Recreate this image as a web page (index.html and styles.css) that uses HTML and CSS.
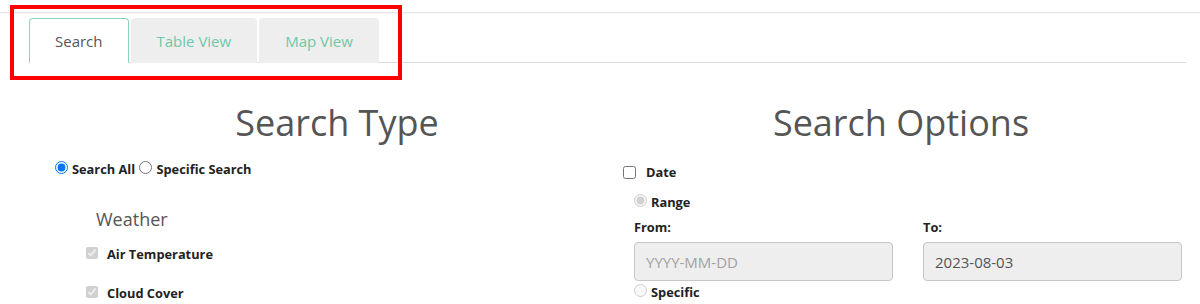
FILE: index.html
```html
<!DOCTYPE html>
<html lang="en">
<head>
<meta charset="utf-8">
<title>Search</title>
<link rel="stylesheet" href="styles.css">
</head>
<body>
<div class="topbar"></div>
<ul class="tabs">
  <li class="tab active">Search</li>
  <li class="tab">Table View</li>
  <li class="tab">Map View</li>
</ul>
<div class="highlight"></div>
<div class="content">
  <section class="col">
    <h2 class="col-title">Search Type</h2>
    <div class="type-row">
      <label class="choice"><input class="radio" type="radio" name="stype" checked>Search All</label>
      <label class="choice"><input class="radio" type="radio" name="stype">Specific Search</label>
    </div>
    <div class="group">
      <h3 class="group-title">Weather</h3>
      <label class="check-row"><input class="check" type="checkbox" checked disabled>Air Temperature</label>
      <label class="check-row second"><input class="check" type="checkbox" checked disabled>Cloud Cover</label>
    </div>
  </section>
  <section class="col">
    <h2 class="col-title">Search Options</h2>
    <label class="date-row"><input class="date-check" type="checkbox">Date</label>
    <div class="date-body">
      <label class="opt-row range-row"><input class="radio" type="radio" name="dmode" checked disabled>Range</label>
      <div class="range-grid">
        <div class="field">
          <label class="field-label">From:</label>
          <input class="date-input" type="text" placeholder="YYYY-MM-DD" readonly>
        </div>
        <div class="field">
          <label class="field-label">To:</label>
          <input class="date-input" type="text" value="2023-08-03" readonly>
        </div>
      </div>
      <label class="opt-row specific-row"><input class="radio" type="radio" name="dmode" disabled>Specific</label>
    </div>
  </section>
</div>
</body>
</html>
```

FILE: styles.css
```css
* { box-sizing: border-box; }

html, body {
  margin: 0;
  padding: 0;
  background: #fff;
  font-family: "Open Sans", "Liberation Sans", sans-serif;
  color: #222;
  height: 304px;
  overflow: hidden;
}

body { position: relative; }

.topbar {
  height: 13px;
  border-bottom: 1px solid #e8e8e8;
  box-shadow: 0 1px 1px rgba(0, 0, 0, 0.04);
}

.tabs {
  list-style: none;
  display: flex;
  gap: 2px;
  margin: 5px 14px 0 29px;
  padding: 0;
  border-bottom: 1px solid #dddddd;
}

.tab {
  margin-bottom: -1px;
  padding: 12px 25px 10px;
  font-size: 15px;
  line-height: 21px;
  color: #6fc8a8;
  background: #eeeeee;
  border: 1px solid transparent;
  border-radius: 4px 4px 0 0;
}

.tab.active {
  color: #555555;
  background: #ffffff;
  border-color: #86d5bc;
  border-bottom-color: #ffffff;
}

.highlight {
  position: absolute;
  left: 10px;
  top: 5px;
  width: 392px;
  height: 75px;
  border: 4px solid #ff0000;
}

.content {
  display: grid;
  grid-template-columns: 564px 564px;
  margin: 40px 0 0 55px;
}

.col-title {
  margin: 0;
  font-size: 36px;
  line-height: 40px;
  font-weight: 400;
  color: #555555;
  text-align: center;
}

.choice, .check-row, .date-row, .opt-row, .field-label {
  display: block;
  font-size: 12.8px;
  line-height: 20px;
  font-weight: 700;
  color: #222;
}

.choice { display: inline; }

.type-row {
  margin-top: 16px;
  font-size: 12.8px;
  line-height: 20px;
}

.radio {
  width: 13px;
  height: 13px;
  margin: 0 4px 0 0;
  vertical-align: baseline;
}

.choice + .choice .radio { margin-left: 1px; }

.group {
  padding-left: 31px;
  margin-top: 28px;
}

.group-title {
  margin: 0 0 13px 10px;
  font-size: 18px;
  line-height: 24px;
  font-weight: 400;
  color: #555555;
}

.check {
  width: 12px;
  height: 12px;
  margin: 0 9px 0 0;
  vertical-align: baseline;
}

.check-row.second { margin-top: 19px; }

.date-row {
  margin: 19px 0 0 4px;
}

.date-check {
  width: 13px;
  height: 13px;
  margin: 0 10px 0 0;
  vertical-align: -2px;
}

.date-body { padding-left: 15px; }

.range-row { margin-top: 10px; }

.range-grid {
  display: grid;
  grid-template-columns: 259px 259px;
  column-gap: 30px;
  margin-top: 5px;
}

.field-label { margin-bottom: 5px; }

.date-input {
  display: block;
  width: 100%;
  height: 39px;
  padding: 0 11px;
  font-family: "Open Sans", "Liberation Sans", sans-serif;
  font-size: 15px;
  color: #555555;
  background: #eeeeee;
  border: 1px solid #c6c6c6;
  border-radius: 4px;
  outline: none;
}

.date-input::placeholder { color: #a2a2a2; }

.specific-row { margin-top: 1px; }
```
